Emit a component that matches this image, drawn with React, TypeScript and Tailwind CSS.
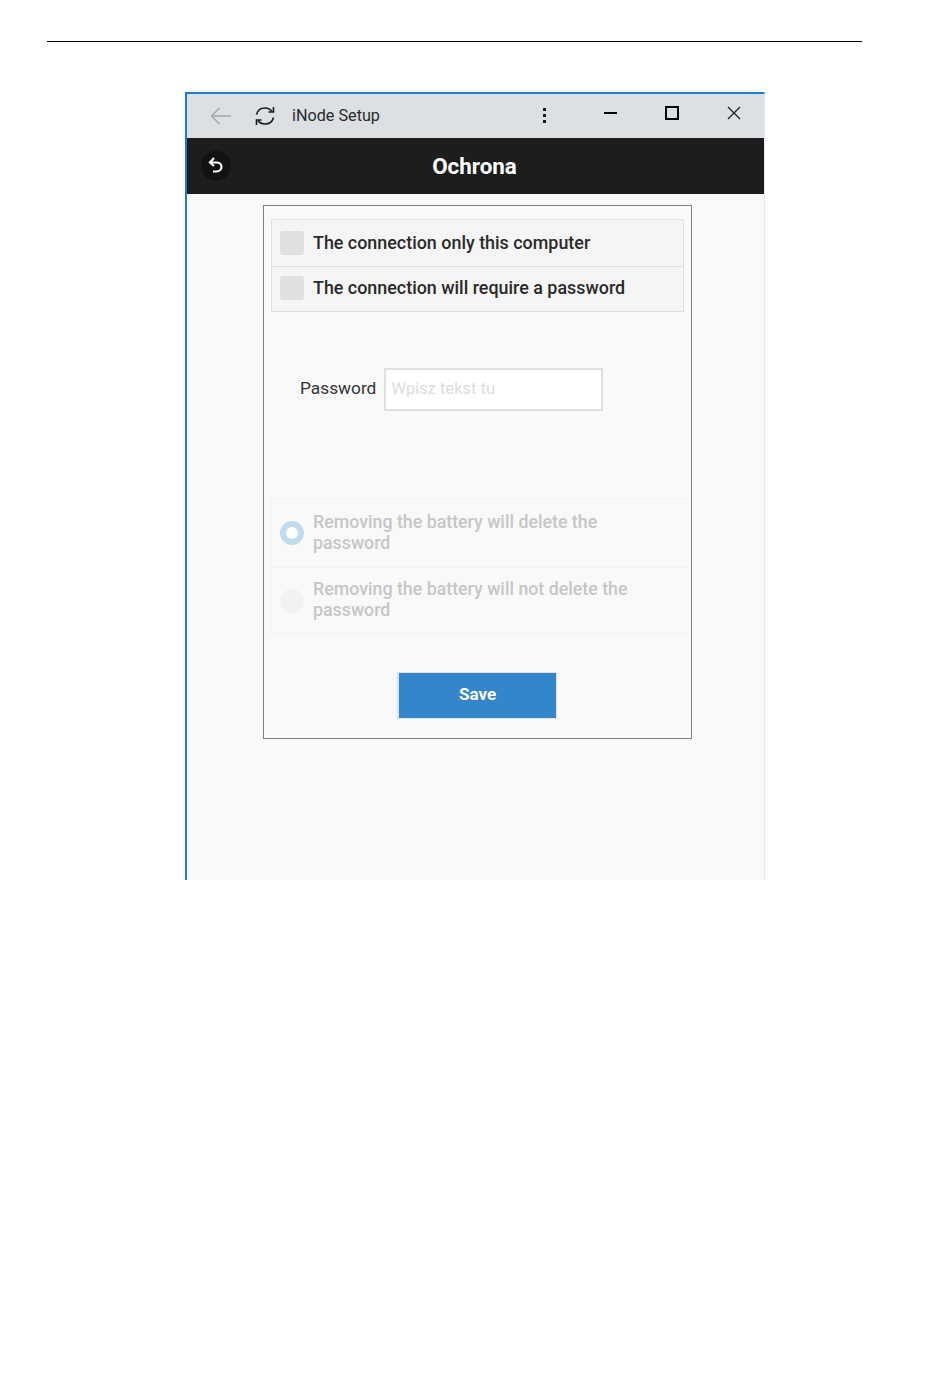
import React from 'react';

function BackArrow() {
  return (
    <svg width="22" height="18" viewBox="0 0 22 18" fill="none" stroke="#a3a5a8" strokeWidth="1.3">
      <path d="M21 9H1.5M9.500 1 1.500 9l8 8" />
    </svg>
  );
}

function RefreshIcon() {
  return (
    <svg width="22" height="22" viewBox="0 0 22 22" fill="none" stroke="#1a1a1a" strokeWidth="1.6">
      <path d="M2.500 9.500C3.500 5.500 7 3 11 3c3 0 5.500 1.300 7 3.500" />
      <path d="M19.500 2v5h-5" />
      <path d="M19.500 12.500C18.500 16.500 15 19 11 19c-3 0-5.500-1.300-7-3.500" />
      <path d="M2.500 20v-5h5" />
    </svg>
  );
}

function UndoIcon() {
  return (
    <svg width="20" height="20" viewBox="0 0 20 20" fill="none" stroke="#ffffff" strokeWidth="2.2">
      <path d="M4 6.500h6.500c3 0 5 1.800 5 4.300s-2 4.700-5 4.700H7" />
      <path d="M8 2 4 6.500l4 3.500" />
    </svg>
  );
}

function CheckRow({ label, last }: { label: string; last?: boolean }) {
  return (
    <div className={`flex items-center pl-2 ${last ? 'h-[44px] pb-[2px]' : 'h-[47px] border-b border-[#dfdfdf]'}`}>
      <div className="w-6 h-6 rounded-[3px] bg-[#e0e0e0] shrink-0" />
      <span className="ml-[9px] text-[17.900px] leading-[22px] font-medium text-[#2a2a2a]">{label}</span>
    </div>
  );
}

function RadioRow({ checked, label, last }: { checked?: boolean; label: string; last?: boolean }) {
  return (
    <div className={`flex items-center pl-2 ${last ? 'h-[65px]' : 'h-[69px] border-b-2 border-[#f4f4f4]'}`}>
      {checked ? (
        <div className="w-6 h-6 rounded-full border-[6px] border-[#c0dbee] bg-white shrink-0" />
      ) : (
        <div className="w-6 h-6 rounded-full bg-[#f2f2f2] shrink-0" />
      )}
      <span className={`ml-[9px] w-[330px] text-[17.800px] leading-[21px] font-medium text-[#c6c6c6] ${last ? '-mt-[4px]' : '-mt-[2px]'}`}>
        {label}
      </span>
    </div>
  );
}

export default function App() {
  return (
    <div className="relative w-[950px] h-[1387px] bg-white overflow-hidden font-['Roboto',sans-serif]">
      <div className="ml-[47px] mr-[88px] pt-[41px]">
        <div className="h-px bg-black" />
      </div>

      <div className="ml-[185px] mt-[50px] w-[580px] h-[788px] flex flex-col border-t-2 border-l-2 border-r border-t-[#1a7fd4] border-l-[#1a7fd4] border-r-[#dbe8f6]">
        {/* title bar */}
        <div className="h-[44px] bg-[#dcdfe4] flex items-center shrink-0 relative">
          <div className="ml-[23px]">
            <BackArrow />
          </div>
          <div className="ml-[22px]">
            <RefreshIcon />
          </div>
          <span className="ml-[16px] mt-[1px] text-[16.200px] text-[#2b2b2b]">iNode Setup</span>
          <div className="ml-[163px] -mt-[1px] flex flex-col gap-[3px]">
            <div className="w-[3px] h-[3px] bg-[#1a1a1a]" />
            <div className="w-[3px] h-[3px] bg-[#1a1a1a]" />
            <div className="w-[3px] h-[3px] bg-[#1a1a1a]" />
          </div>
          <div className="ml-[58px] -mt-[6px] w-[13px] h-[2px] bg-black" />
          <div className="ml-[48px] -mt-[7px] w-[14px] h-[14px] border-2 border-black" />
          <svg className="ml-[48px] -mt-[7px]" width="14" height="14" viewBox="0 0 14 14" stroke="#1a1a1a" strokeWidth="1.200">
            <path d="M1 1l12 12M13 1 1 13" />
          </svg>
        </div>

        {/* header */}
        <div className="h-[56px] bg-[#1d1d1d] shrink-0 relative flex items-center justify-center">
          <div className="absolute left-[14px] top-[13px] w-[30px] h-[30px] rounded-full bg-[#121212] flex items-center justify-center">
            <UndoIcon />
          </div>
          <span className="ml-[-2px] mt-[2px] text-[22.400px] font-bold text-white">Ochrona</span>
        </div>

        {/* content */}
        <div className="flex-1 bg-[#f9f9f9] pt-[11px] pl-[76px]">
          <div className="w-[429px] h-[534px] border border-[#808080] pt-[13px] pl-[7px] flex flex-col overflow-hidden">
            <div className="w-[413px] border border-[#dfdfdf] bg-[#f5f5f5] shrink-0">
              <CheckRow label="The connection only this computer" />
              <CheckRow label="The connection will require a password" last />
            </div>

            <div className="mt-[56px] flex items-center h-[43px] shrink-0">
              <span className="ml-[29px] -mt-[2px] text-[17.300px] text-[#333333]">Password</span>
              <div className="ml-[8px] w-[219px] h-[43px] border-2 border-[#dfdfdf] bg-white flex items-center pl-[5px]">
                <span className="text-[16.500px] text-[#dcdcdc]">Wpisz tekst tu</span>
              </div>
            </div>

            <div className="mt-[87px] w-[430px] border border-[#f3f3f3] shrink-0">
              <RadioRow checked label="Removing the battery will delete the password" />
              <RadioRow label="Removing the battery will not delete the password" last />
            </div>

            <div className="mt-[38px] ml-[126px] w-[160px] h-[47px] bg-[#3385cc] border-y border-l-2 border-r border-[#e2e2e2] flex items-center justify-center shrink-0">
              <span className="-mt-[2px] text-[17px] font-bold text-white">Save</span>
            </div>
          </div>
        </div>
      </div>
    </div>
  );
}
